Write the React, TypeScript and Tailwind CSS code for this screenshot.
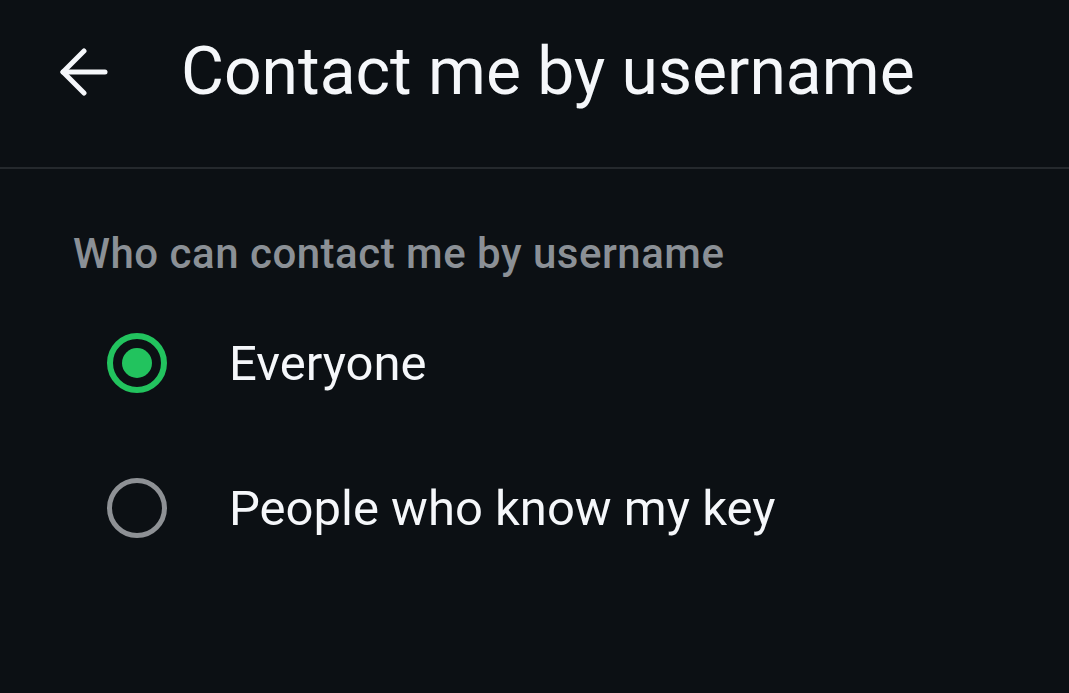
import React, { useState } from 'react';

const options = [
  { id: 'everyone', label: 'Everyone' },
  { id: 'key', label: 'People who know my key' },
];

const BackArrow = () => (
  <svg width="48" height="48" viewBox="0 0 48 48" fill="none" stroke="#f5f7fa" strokeWidth="5" strokeLinecap="round" strokeLinejoin="round">
    <path d="M45 24H3" />
    <path d="M24 3L3 24l21 21" />
  </svg>
);

const Radio = ({ checked }: { checked: boolean }) =>
  checked ? (
    <span className="flex h-[60px] w-[60px] items-center justify-center rounded-full border-[6px] border-[#22c35e]">
      <span className="h-[30px] w-[30px] rounded-full bg-[#22c35e]" />
    </span>
  ) : (
    <span className="h-[60px] w-[60px] rounded-full border-[5px] border-[#8e9195]" />
  );

const App = () => {
  const [selected, setSelected] = useState('everyone');

  return (
    <div className="h-[693px] w-full overflow-hidden bg-[#0c1014] font-['Roboto',sans-serif] text-[#f5f7fa]">
      <header className="flex h-[169px] items-center border-b-2 border-[#25292d] pb-[24px]">
        <button className="ml-[60px] flex h-[48px] w-[48px] items-center justify-center">
          <BackArrow />
        </button>
        <h1 className="ml-[73px] text-[66px] leading-none">Contact me by username</h1>
      </header>

      <section className="pt-[64px]">
        <h2 className="pl-[73px] text-[42px] font-medium leading-none tracking-[0.5px] text-[#8b9096]">
          Who can contact me by username
        </h2>
        <div className="mt-[58px] flex flex-col gap-[85px]">
          {options.map((o) => (
            <button
              key={o.id}
              onClick={() => setSelected(o.id)}
              className="flex items-center pl-[107px] text-left"
            >
              <Radio checked={selected === o.id} />
              <span className="ml-[62px] text-[49px] leading-none">{o.label}</span>
            </button>
          ))}
        </div>
      </section>
    </div>
  );
};

export default App;
